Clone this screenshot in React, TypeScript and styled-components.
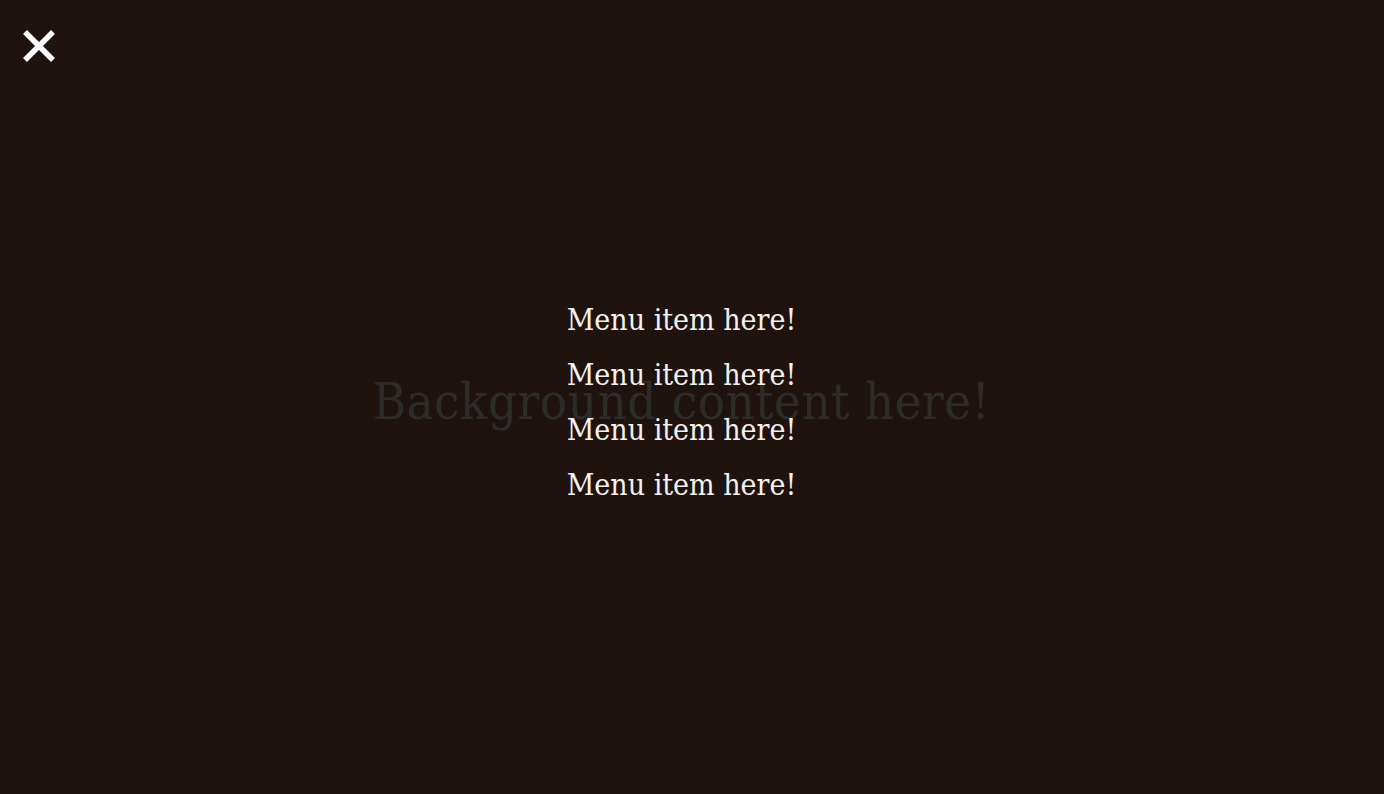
import React from "react";
import styled, { createGlobalStyle } from "styled-components";

const Global = createGlobalStyle`
  html, body { margin: 0; padding: 0; height: 100%; background: #1f1310; }
  #root { height: 100%; }
`;

const Page = styled.div`
  position: relative;
  width: 100vw;
  height: 100vh;
  overflow: hidden;
  box-sizing: border-box;
  padding-right: 21px;
  background: #1f1310;
  display: flex;
  align-items: center;
  justify-content: center;
`;

const BackgroundText = styled.h1`
  margin: 0;
  padding-top: 8px;
  font-family: "DejaVu Serif Condensed", "DejaVu Serif", serif;
  font-weight: normal;
  font-size: 50.5px;
  color: #2c2c2b;
  letter-spacing: 0.5px;
`;

const Overlay = styled.nav`
  position: absolute;
  inset: 0;
  box-sizing: border-box;
  padding-right: 21px;
  display: flex;
  align-items: center;
  justify-content: center;
`;

const MenuList = styled.ul`
  list-style: none;
  margin: 10px 0 0 0;
  padding: 0;
  display: flex;
  flex-direction: column;
  gap: 17px;
  align-items: center;
`;

const MenuItem = styled.li`
  font-family: "DejaVu Serif Condensed", "DejaVu Serif", serif;
  font-size: 30px;
  line-height: 38px;
  color: #f4f0ec;
`;

const CloseButton = styled.button`
  position: absolute;
  top: 28px;
  left: 21px;
  width: 36px;
  height: 36px;
  padding: 0;
  border: none;
  background: transparent;
  display: flex;
  align-items: center;
  justify-content: center;
  cursor: pointer;
`;

export default function App() {
  return (
    <>
      <Global />
      <Page>
        <BackgroundText>Background content here!</BackgroundText>
        <Overlay>
          <CloseButton aria-label="Close">
            <svg width="36" height="36" viewBox="0 0 36 36">
              <path d="M4 4 L32 32 M32 4 L4 32" stroke="#ffffff" strokeWidth="5.5" strokeLinecap="butt" />
            </svg>
          </CloseButton>
          <MenuList>
            {[0, 1, 2, 3].map((i) => (
              <MenuItem key={i}>Menu item here!</MenuItem>
            ))}
          </MenuList>
        </Overlay>
      </Page>
    </>
  );
}
